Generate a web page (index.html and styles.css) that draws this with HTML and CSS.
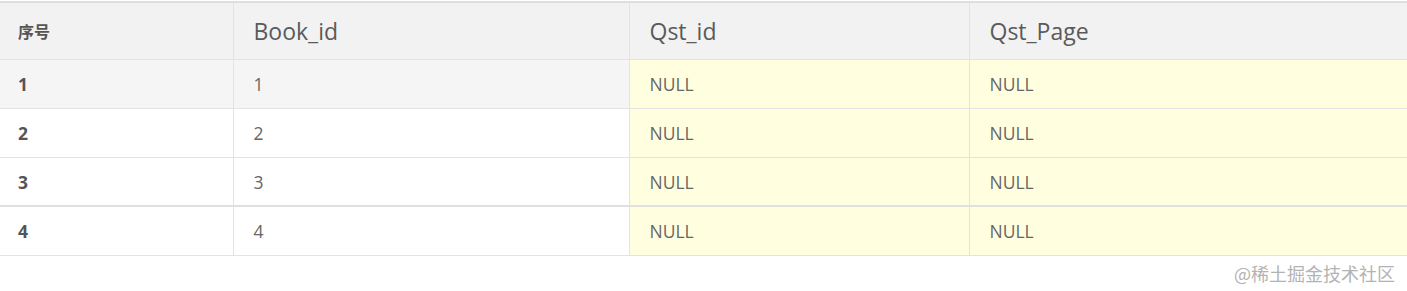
FILE: index.html
```html
<!DOCTYPE html>
<html lang="zh">
<head>
<meta charset="utf-8">
<link rel="stylesheet" href="styles.css">
</head>
<body>
<div class="page">
  <table class="grid">
    <colgroup>
      <col class="c1"><col class="c2"><col class="c3"><col class="c4">
    </colgroup>
    <thead>
      <tr>
        <th class="idx">序号</th>
        <th>Book_id</th>
        <th>Qst_id</th>
        <th>Qst_Page</th>
      </tr>
    </thead>
    <tbody>
      <tr class="sel">
        <td class="idx">1</td><td>1</td><td class="null">NULL</td><td class="null">NULL</td>
      </tr>
      <tr>
        <td class="idx">2</td><td>2</td><td class="null">NULL</td><td class="null">NULL</td>
      </tr>
      <tr class="thick">
        <td class="idx">3</td><td>3</td><td class="null">NULL</td><td class="null">NULL</td>
      </tr>
      <tr>
        <td class="idx">4</td><td>4</td><td class="null">NULL</td><td class="null">NULL</td>
      </tr>
    </tbody>
  </table>
  <div class="mark">@稀土掘金技术社区</div>
</div>
</body>
</html>
```
FILE: styles.css
```css
html, body {
  margin: 0;
  padding: 0;
  background: #ffffff;
}
.page {
  width: 1407px;
  height: 291px;
  padding-top: 1px;
  box-sizing: border-box;
  font-family: "Open Sans", "Noto Sans CJK SC", sans-serif;
  color: #555555;
}
.grid {
  width: 1407px;
  border-collapse: collapse;
  table-layout: fixed;
  border-top: 2px solid #dedede;
}
.c1 { width: 233px; }
.c2 { width: 396px; }
.c3 { width: 340px; }
.c4 { width: 438px; }
th, td {
  text-align: left;
  padding: 0 0 0 20px;
  border-left: 1px solid #e3e3e3;
  border-bottom: 1px solid #e3e3e3;
  white-space: nowrap;
}
th:first-child, td:first-child {
  border-left: none;
  padding-left: 18px;
}
thead tr {
  border-top: 1px solid #ffffff;
}
th {
  height: 56px;
  background: #f2f2f2;
  font-weight: 400;
  font-size: 23px;
  color: #5a5a5a;
}
th.idx {
  font-family: "Noto Sans CJK SC", sans-serif;
  font-weight: 700;
  font-size: 16px;
  color: #555555;
}
td {
  height: 48px;
  font-size: 17.5px;
  color: #666666;
}
td.idx {
  font-weight: 700;
  color: #555555;
}
tr.sel td {
  background: #f5f5f5;
}
td.null, tr.sel td.null {
  background: #ffffe0;
}
tr.thick td {
  border-bottom: 2px solid #e0e0e0;
  height: 47px;
}
.mark {
  display: flex;
  justify-content: flex-end;
  padding: 4px 12px 0 0;
  font-family: "Noto Sans CJK SC", sans-serif;
  font-size: 18px;
  color: #b3b3b3;
}
```
